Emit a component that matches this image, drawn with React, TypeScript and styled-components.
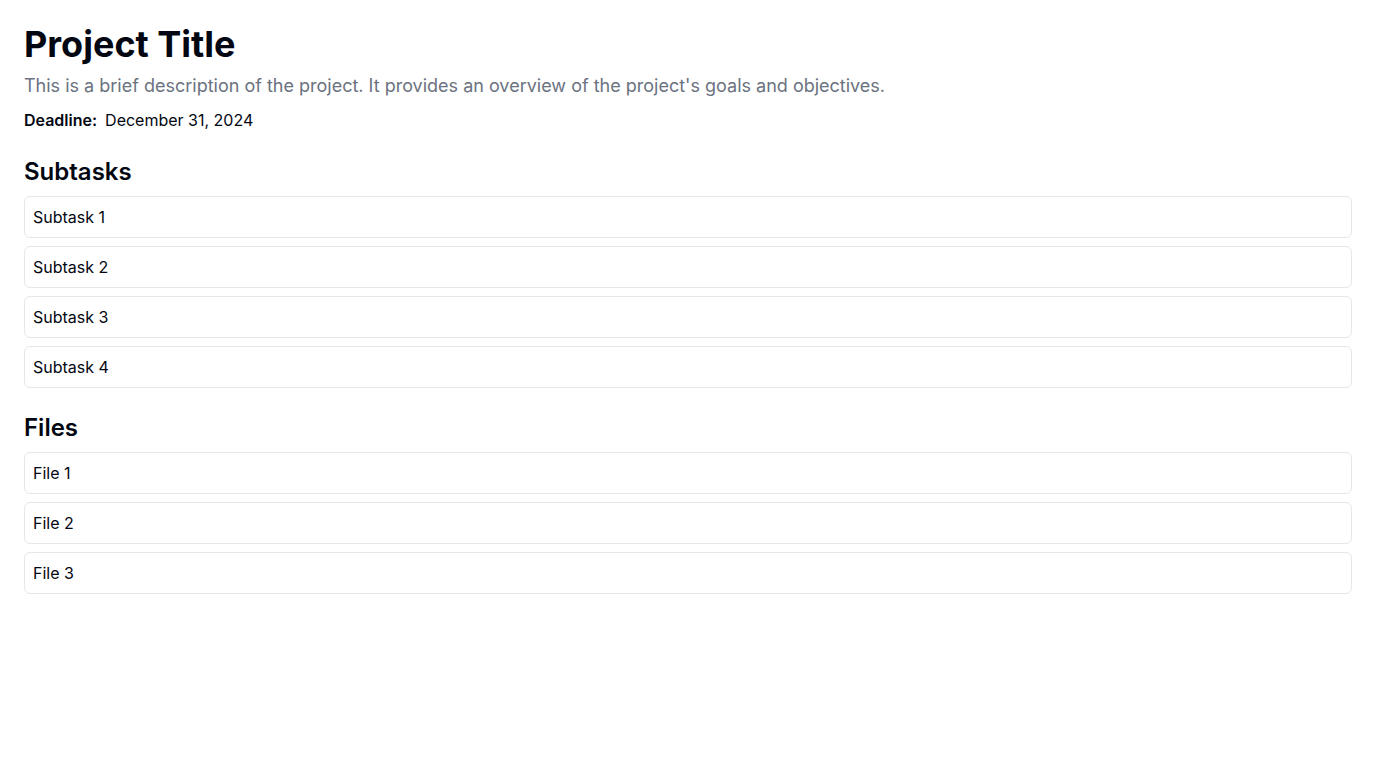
import React from 'react';
import styled, { createGlobalStyle } from 'styled-components';

const GlobalStyle = createGlobalStyle`
    body {
        margin: 0;
        background: #ffffff;
        font-family: Inter, "Noto Sans", sans-serif;
        color: #030712;
    }
`;

const Page = styled.div`
    padding: 24px;
`;

const Title = styled.h1`
    margin: 0;
    font-size: 36px;
    line-height: 40px;
    font-weight: 700;
`;

const Description = styled.p`
    margin: 8px 0 0;
    font-size: 18px;
    line-height: 28px;
    color: #6b7280;
`;

const Deadline = styled.p`
    margin: 8px 0 0;
    font-size: 16px;
    line-height: 24px;
`;

const DeadlineLabel = styled.span`
    font-weight: 600;
    margin-right: 8px;
`;

const Section = styled.section`
    margin-top: 24px;
`;

const SectionTitle = styled.h2`
    margin: 0 0 8px;
    font-size: 24px;
    line-height: 32px;
    font-weight: 600;
`;

const List = styled.div`
    display: flex;
    flex-direction: column;
    gap: 8px;
`;

const Item = styled.div`
    padding: 8px;
    border: 1px solid #e5e7eb;
    border-radius: 6px;
    font-size: 16px;
    line-height: 24px;
`;

const subtasks = ['Subtask 1', 'Subtask 2', 'Subtask 3', 'Subtask 4'];
const files = ['File 1', 'File 2', 'File 3'];

export default function App() {
    return (
        <Page>
            <GlobalStyle />
            <Title>Project Title</Title>
            <Description>
                This is a brief description of the project. It provides an overview of the project's goals and objectives.
            </Description>
            <Deadline>
                <DeadlineLabel>Deadline:</DeadlineLabel>
                December 31, 2024
            </Deadline>
            <Section>
                <SectionTitle>Subtasks</SectionTitle>
                <List>
                    {subtasks.map(s => (
                        <Item key={s}>{s}</Item>
                    ))}
                </List>
            </Section>
            <Section>
                <SectionTitle>Files</SectionTitle>
                <List>
                    {files.map(f => (
                        <Item key={f}>{f}</Item>
                    ))}
                </List>
            </Section>
        </Page>
    );
}
